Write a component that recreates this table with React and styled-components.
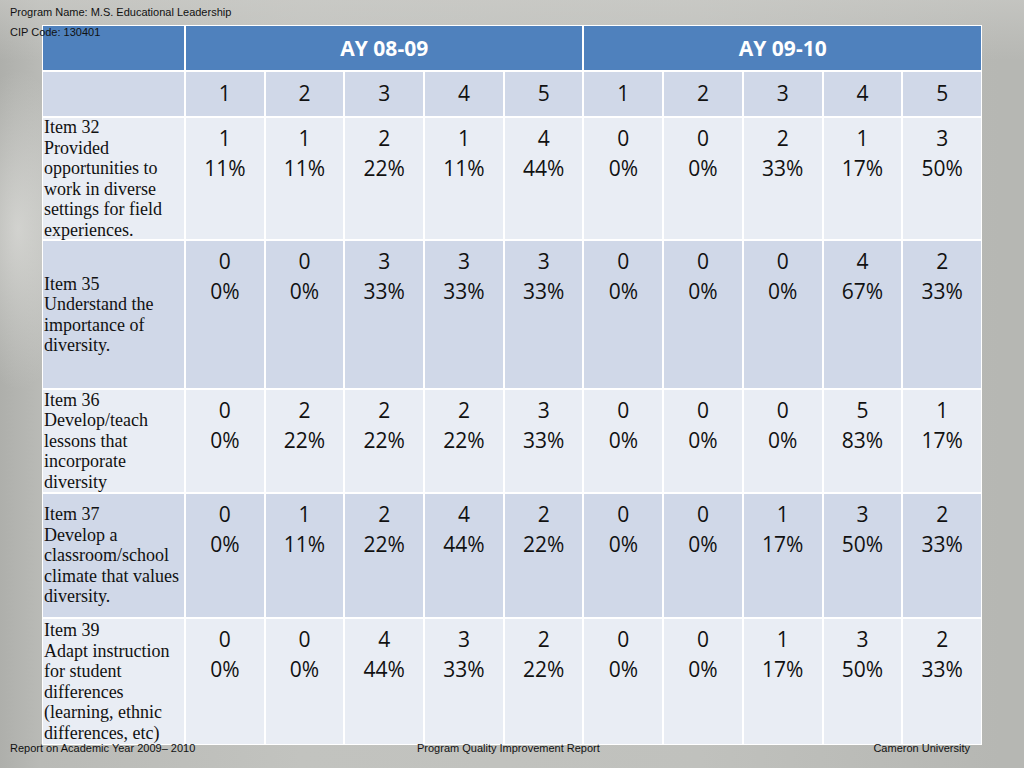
import React from 'react'
import styled, { createGlobalStyle } from 'styled-components'

const GlobalStyle = createGlobalStyle`
  html, body {
    margin: 0;
    padding: 0;
  }
  body {
    font-family: "Liberation Sans", Arial, sans-serif;
  }
`

const Page = styled.div`
  position: relative;
  width: 1024px;
  height: 768px;
  overflow: hidden;
  display: flex;
  flex-direction: column;
  background:
    radial-gradient(ellipse 60px 160px at 18px 230px, rgba(235,235,232,0.55), rgba(235,235,232,0) 100%),
    linear-gradient(180deg, rgba(205,205,201,0.6) 0px, rgba(205,205,201,0) 60px),
    linear-gradient(90deg, #aeafab 0px, #b9bab6 40px, #c2c3bf 300px, #c0c1bd 700px, #b6b7b3 1000px);
  color: #111;
`

const Note = styled.div`
  font-size: 11px;
  line-height: 13px;
  padding: 6px 0 0 10px;
  height: 19px;
  box-sizing: border-box;
`

const CipNote = styled.div`
  position: absolute;
  top: 26px;
  left: 10px;
  font-size: 11px;
  line-height: 13px;
  z-index: 2;
`

const Grid = styled.div`
  margin: 6px 0 0 42px;
  width: 940px;
  display: grid;
  grid-template-columns: 141px repeat(10, 1fr);
  grid-template-rows: 44px 44px 121px 147px 102px 123px 125px;
  gap: 2px;
  background: #ffffff;
  border: 1px solid #ffffff;
  box-sizing: border-box;
`

const HeadCell = styled.div`
  grid-column: ${p => p.$span ? `span ${p.$span}` : 'auto'};
  background: #4f81bd;
  color: #fff;
  font-family: "Open Sans", sans-serif;
  font-weight: 700;
  font-size: 21px;
  display: flex;
  align-items: center;
  justify-content: center;
`

const SubCell = styled.div`
  background: #d0d8e8;
  font-family: "Open Sans", sans-serif;
  font-size: 21px;
  display: flex;
  align-items: center;
  justify-content: center;
  padding-bottom: 3px;
  color: #111;
`

const shade = p => (p.$dark ? '#d0d8e8' : '#e9edf4')

const LabelCell = styled.div`
  background: ${shade};
  font-family: "Liberation Serif", "Times New Roman", serif;
  font-size: 18px;
  line-height: 20.5px;
  padding: 0 0 0 1px;
  display: flex;
  align-items: center;
  white-space: nowrap;
  overflow: visible;
  color: #111;
`

const NumCell = styled.div`
  background: ${shade};
  font-family: "Open Sans", sans-serif;
  font-size: 21px;
  line-height: 30px;
  padding-top: 5px;
  text-align: center;
  color: #111;
`

const Footer = styled.div`
  margin-top: -3px;
  height: 23px;
  display: flex;
  align-items: flex-start;
  font-size: 11px;
  line-height: 13px;
  padding: 0 54px 0 10px;
  position: relative;
`

const FootLeft = styled.div`
  width: 407px;
`

const FootMid = styled.div`
  flex: 1;
`

const rows = [
  {
    lines: ['Item 32', 'Provided', 'opportunities to', 'work in diverse', 'settings for field', 'experiences.'],
    counts: [1, 1, 2, 1, 4, 0, 0, 2, 1, 3],
    pcts: [11, 11, 22, 11, 44, 0, 0, 33, 17, 50],
  },
  {
    lines: ['Item 35', 'Understand the', 'importance of', 'diversity.'],
    counts: [0, 0, 3, 3, 3, 0, 0, 0, 4, 2],
    pcts: [0, 0, 33, 33, 33, 0, 0, 0, 67, 33],
    dark: true,
  },
  {
    lines: ['Item 36', 'Develop/teach', 'lessons that', 'incorporate', 'diversity'],
    counts: [0, 2, 2, 2, 3, 0, 0, 0, 5, 1],
    pcts: [0, 22, 22, 22, 33, 0, 0, 0, 83, 17],
  },
  {
    lines: ['Item 37', 'Develop a', 'classroom/school', 'climate that values', 'diversity.'],
    counts: [0, 1, 2, 4, 2, 0, 0, 1, 3, 2],
    pcts: [0, 11, 22, 44, 22, 0, 0, 17, 50, 33],
    dark: true,
  },
  {
    lines: ['Item 39', 'Adapt instruction', 'for student', 'differences', '(learning, ethnic', 'differences, etc)'],
    counts: [0, 0, 4, 3, 2, 0, 0, 1, 3, 2],
    pcts: [0, 0, 44, 33, 22, 0, 0, 17, 50, 33],
  },
]

const scale = [1, 2, 3, 4, 5, 1, 2, 3, 4, 5]

export default function App() {
  return (
    <Page>
      <GlobalStyle />
      <Note>Program Name: M.S. Educational Leadership</Note>
      <CipNote>CIP Code: 130401</CipNote>
      <Grid>
        <HeadCell />
        <HeadCell $span={5}>AY 08-09</HeadCell>
        <HeadCell $span={5}>AY 09-10</HeadCell>
        <SubCell />
        {scale.map((n, i) => <SubCell key={i}>{n}</SubCell>)}
        {rows.map((r, ri) => (
          <React.Fragment key={ri}>
            <LabelCell $dark={r.dark}>
              <div>
                {r.lines.map((l, li) => <div key={li}>{l}</div>)}
              </div>
            </LabelCell>
            {r.counts.map((c, ci) => (
              <NumCell key={ci} $dark={r.dark}>
                {c}<br />{r.pcts[ci]}%
              </NumCell>
            ))}
          </React.Fragment>
        ))}
      </Grid>
      <Footer>
        <FootLeft>Report on Academic Year 2009– 2010</FootLeft>
        <FootMid>Program Quality Improvement Report</FootMid>
        <div>Cameron University</div>
      </Footer>
    </Page>
  )
}
